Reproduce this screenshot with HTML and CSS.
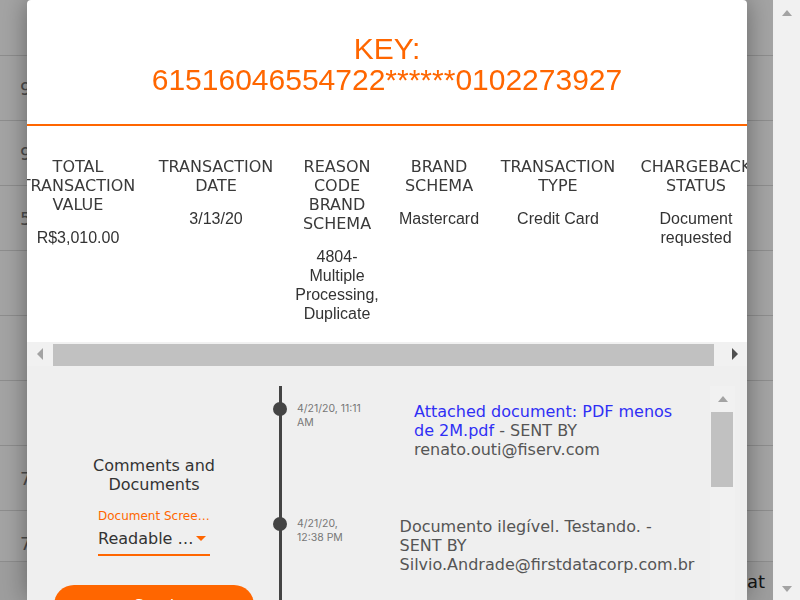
FILE: index.html
```html
<!DOCTYPE html>
<html lang="en">
<head>
    <meta charset="UTF-8">
    <meta name="viewport" content="width=device-width, initial-scale=1.0">
    <title>Chargeback Details</title>
    <link rel="stylesheet" href="styles.css">
</head>
<body>
    <div class="page">
        <div class="page-list">
            <div class="page-row page-head"></div>
            <div class="page-row">98431</div>
            <div class="page-row">91207</div>
            <div class="page-row">56720</div>
            <div class="page-row"></div>
            <div class="page-row"></div>
            <div class="page-row"></div>
            <div class="page-row">73310</div>
            <div class="page-row">70084</div>
        </div>
        <div class="page-footer">Chat</div>
    </div>
    <div class="page-scroll">
        <i class="tri tri-up"></i>
        <i class="tri tri-down"></i>
    </div>

    <div class="overlay"></div>

    <div class="modal">
        <header class="modal-head">
            <h2 class="key">
                <span>KEY:</span>
                <span>61516046554722******0102273927</span>
            </h2>
        </header>

        <section class="summary">
            <div class="summary-grid">
                <div class="col">
                    <div class="col-head">Total transaction value</div>
                    <div class="col-val">R$3,010.00</div>
                </div>
                <div class="col">
                    <div class="col-head">Transaction date</div>
                    <div class="col-val">3/13/20</div>
                </div>
                <div class="col">
                    <div class="col-head">Reason code brand schema</div>
                    <div class="col-val">4804-Multiple Processing, Duplicate</div>
                </div>
                <div class="col">
                    <div class="col-head">Brand schema</div>
                    <div class="col-val">Mastercard</div>
                </div>
                <div class="col">
                    <div class="col-head">Transaction type</div>
                    <div class="col-val">Credit Card</div>
                </div>
                <div class="col">
                    <div class="col-head">Chargeback status</div>
                    <div class="col-val">Document requested</div>
                </div>
            </div>
        </section>

        <div class="hscroll">
            <span class="hscroll-btn"><i class="tri tri-left"></i></span>
            <div class="hscroll-track"><div class="hscroll-thumb"></div></div>
            <span class="hscroll-btn"><i class="tri tri-right"></i></span>
        </div>

        <section class="history">
            <div class="history-side">
                <h3>Comments and Documents</h3>
                <div class="select">
                    <label>Document Screening</label>
                    <div class="select-value">
                        <span>Readable Document</span>
                        <i class="caret"></i>
                    </div>
                </div>
                <button class="btn-send" type="button">Send</button>
            </div>

            <div class="thread">
                <div class="entry">
                    <span class="dot"></span>
                    <div class="entry-date">4/21/20, 11:11 AM</div>
                    <div class="entry-body">
                        <p><a href="#">Attached document: PDF menos de 2M.pdf</a> - SENT BY renato.outi@fiserv.com</p>
                    </div>
                </div>
                <div class="entry">
                    <span class="dot"></span>
                    <div class="entry-date">4/21/20, 12:38 PM</div>
                    <div class="entry-body">
                        <p>Documento ilegível. Testando. - SENT BY Silvio.Andrade@firstdatacorp.com.br</p>
                    </div>
                </div>
            </div>

            <div class="vscroll">
                <span class="vscroll-btn"><i class="tri tri-up"></i></span>
                <div class="vscroll-thumb"></div>
            </div>
        </section>
    </div>
</body>
</html>
```

FILE: styles.css
```css
* {
    box-sizing: border-box;
    margin: 0;
    padding: 0;
}

html, body {
    width: 100%;
    height: 100%;
}

body {
    display: flex;
    overflow: hidden;
    font-family: "DejaVu Sans", sans-serif;
    background: #ffffff;
}

/* page behind the dialog */

.page {
    flex: 1;
    display: flex;
    flex-direction: column;
    height: 600px;
}

.page-list {
    flex: 1;
    overflow: hidden;
}

.page-row {
    height: 65px;
    border-bottom: 1px solid #dcdcdc;
    padding-left: 20px;
    display: flex;
    align-items: center;
    font-size: 18px;
    color: #777;
}

.page-head {
    height: 56px;
}

.page-footer {
    height: 39px;
    flex-shrink: 0;
    border-top: 1px solid #dcdcdc;
    background: #f6f6f6;
    display: flex;
    align-items: center;
    justify-content: flex-end;
    padding-right: 8px;
    font-size: 18px;
    color: #222;
}

.page-scroll {
    width: 27px;
    height: 600px;
    background: #f1f1f1;
    display: flex;
    flex-direction: column;
    justify-content: space-between;
    align-items: center;
    padding: 10px 0 8px 1px;
}

.tri {
    display: block;
    width: 0;
    height: 0;
}

.tri-up {
    border-left: 5px solid transparent;
    border-right: 5px solid transparent;
    border-bottom: 6px solid #a3a3a3;
}

.tri-down {
    border-left: 5px solid transparent;
    border-right: 5px solid transparent;
    border-top: 6px solid #a3a3a3;
}

.tri-left {
    border-top: 6px solid transparent;
    border-bottom: 6px solid transparent;
    border-right: 6px solid #a3a3a3;
}

.tri-right {
    border-top: 6px solid transparent;
    border-bottom: 6px solid transparent;
    border-left: 6px solid #505050;
}

.overlay {
    position: fixed;
    top: 0;
    left: 0;
    right: 27px;
    bottom: 0;
    background: rgba(0, 0, 0, 0.36);
}

/* dialog */

.modal {
    position: fixed;
    top: 0;
    left: 27px;
    width: 720px;
    height: 600px;
    overflow: hidden;
    background: #ffffff;
    border-radius: 4px 4px 0 0;
    box-shadow: 0 0 26px rgba(0, 0, 0, 0.38);
    display: flex;
    flex-direction: column;
}

.modal-head {
    height: 126px;
    flex-shrink: 0;
    padding-top: 33px;
    border-bottom: 2px solid #ff6600;
}

.key {
    font-family: "Liberation Sans", Arial, sans-serif;
    font-size: 30px;
    font-weight: normal;
    line-height: 31px;
    color: #ff6600;
    text-align: center;
}

.key span {
    display: block;
}

.summary {
    flex-shrink: 0;
    padding: 31px 0 19px;
    overflow: hidden;
}

.summary-grid {
    display: grid;
    grid-template-columns: 138px 138px 104px 100px 138px 138px;
    justify-content: center;
}

.col {
    padding: 0 10px;
    text-align: center;
}

.col-head {
    font-size: 16px;
    line-height: 19px;
    text-transform: uppercase;
    color: #3a3a3a;
}

.col-val {
    margin-top: 14px;
    font-family: "Liberation Sans", Arial, sans-serif;
    font-size: 16px;
    line-height: 19px;
    color: #333;
}

.hscroll {
    height: 24px;
    flex-shrink: 0;
    display: flex;
    background: #f1f1f1;
}

.hscroll-btn {
    width: 26px;
    display: flex;
    align-items: center;
    justify-content: center;
}

.hscroll-btn:last-child {
    width: 25px;
}

.hscroll-track {
    flex: 1;
}

.hscroll-thumb {
    width: 661px;
    height: 22px;
    margin-top: 2px;
    background: #c1c1c1;
}

/* comments area */

.history {
    flex: 1 0 auto;
    display: flex;
    background: #efefef;
    padding: 20px 12px 0 0;
}

.history-side {
    width: 252px;
    flex-shrink: 0;
    padding: 70px 25px 0 27px;
    text-align: center;
}

.history-side h3 {
    font-size: 16px;
    font-weight: normal;
    line-height: 19px;
    color: #333;
}

.select {
    width: 112px;
    margin: 15px auto 0;
    text-align: left;
    border-bottom: 2px solid #ff6600;
}

.select label {
    display: block;
    font-size: 12px;
    line-height: 15px;
    color: #ff6600;
    white-space: nowrap;
    overflow: hidden;
    text-overflow: ellipsis;
}

.select-value {
    display: flex;
    align-items: center;
    margin-top: 5px;
    padding-bottom: 6px;
    font-size: 16px;
    line-height: 19px;
    color: #333;
}

.select-value span {
    flex: 1;
    min-width: 0;
    white-space: nowrap;
    overflow: hidden;
    text-overflow: ellipsis;
}

.caret {
    width: 0;
    height: 0;
    margin-right: 4px;
    border-left: 5px solid transparent;
    border-right: 5px solid transparent;
    border-top: 5px solid #ff6600;
}

.btn-send {
    display: block;
    width: 200px;
    height: 40px;
    margin-top: 29px;
    border: none;
    border-radius: 22px;
    background: #ff6600;
    color: #ffffff;
    font-family: "DejaVu Sans", sans-serif;
    font-size: 16px;
}

.thread {
    flex: 1;
    min-width: 0;
    border-left: 3px solid #444;
}

.entry {
    position: relative;
    display: flex;
    padding: 16px 0 42px 15px;
}

.dot {
    position: absolute;
    left: -9px;
    top: 16px;
    width: 14px;
    height: 14px;
    border-radius: 50%;
    background: #444;
}

.entry-date {
    width: 70px;
    flex-shrink: 0;
    font-family: Inter, sans-serif;
    font-size: 10.5px;
    line-height: 14px;
    color: #777;
}

.entry-body {
    flex: 1;
    min-width: 0;
    display: flex;
    justify-content: center;
    margin-left: 17px;
    padding: 0 30px;
}

.entry-body p {
    font-size: 16px;
    line-height: 19px;
    color: #555;
}

.entry-body a {
    color: #2f2ff5;
    text-decoration: none;
}

.vscroll {
    width: 25px;
    flex-shrink: 0;
    background: #f1f1f1;
}

.vscroll-btn {
    height: 26px;
    display: flex;
    align-items: center;
    justify-content: center;
}

.vscroll-thumb {
    width: 22px;
    height: 75px;
    margin-left: 1px;
    background: #c1c1c1;
}
```
